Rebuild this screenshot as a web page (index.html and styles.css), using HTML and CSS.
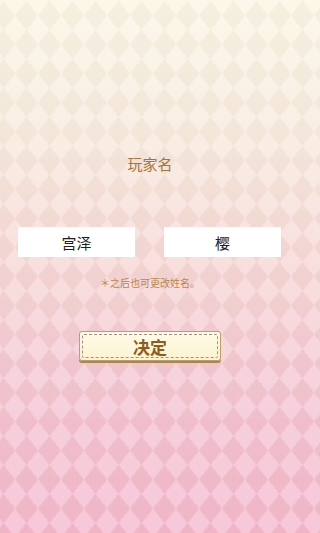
FILE: index.html
```html
<!DOCTYPE html>
<html lang="zh-CN">
<head>
<meta charset="utf-8">
<title>玩家名</title>
<link rel="stylesheet" href="styles.css">
</head>
<body>
<main class="screen">
  <h1 class="title">玩家名</h1>
  <div class="names">
    <div class="name-box">宫泽</div>
    <div class="name-box">樱</div>
  </div>
  <p class="note">＊之后也可更改姓名。</p>
  <button class="confirm" type="button"><span class="confirm-inner">决定</span></button>
</main>
</body>
</html>
```
FILE: styles.css
```css
html, body {
  margin: 0;
  padding: 0;
}

body {
  position: relative;
  min-width: 300px;
  height: 533px;
  overflow: hidden;
  font-family: "Noto Sans CJK SC", "Noto Sans", sans-serif;
  background-color: #f6e0dc;
  background-image:
    linear-gradient(to bottom right, rgba(150, 110, 40, 0.06) 25%, transparent 25%),
    linear-gradient(to bottom left, rgba(150, 110, 40, 0.06) 25%, transparent 25%),
    linear-gradient(to top right, rgba(150, 110, 40, 0.06) 25%, transparent 25%),
    linear-gradient(to top left, rgba(150, 110, 40, 0.06) 25%, transparent 25%),
    linear-gradient(to bottom, #fbf8ea 0%, #f9eee4 25%, #f8dede 52%, #f6cfdc 78%, #f6c8d9 100%);
  background-size: 23px 29px, 23px 29px, 23px 29px, 23px 29px, 100% 533px;
  background-position: 3.5px 15.5px, 3.5px 15.5px, 3.5px 15.5px, 3.5px 15.5px, 0 0;
  background-repeat: repeat, repeat, repeat, repeat, repeat-x;
}

/* pink tint of the dark diamonds, fading in toward the bottom */
body::before {
  content: "";
  position: absolute;
  inset: 0;
  z-index: 0;
  pointer-events: none;
  background-image:
    linear-gradient(to bottom right, rgba(230, 40, 120, 0.09) 25%, transparent 25%),
    linear-gradient(to bottom left, rgba(230, 40, 120, 0.09) 25%, transparent 25%),
    linear-gradient(to top right, rgba(230, 40, 120, 0.09) 25%, transparent 25%),
    linear-gradient(to top left, rgba(230, 40, 120, 0.09) 25%, transparent 25%);
  background-size: 23px 29px;
  background-position: 3.5px 15.5px;
  -webkit-mask-image: linear-gradient(to bottom, transparent 25%, #000 100%);
  mask-image: linear-gradient(to bottom, transparent 25%, #000 100%);
}

.screen {
  position: relative;
  z-index: 1;
  width: 300px;
  display: flex;
  flex-direction: column;
  align-items: center;
  height: 533px;
  box-sizing: border-box;
  padding-top: 154px;
}

.title {
  margin: 0;
  font-size: 15px;
  line-height: 20px;
  height: 20px;
  font-weight: normal;
  color: #a4763a;
}

.names {
  margin-top: 53px;
  display: flex;
  gap: 29px;
  width: 100%;
  box-sizing: border-box;
  padding-left: 18px;
}

.name-box {
  width: 117px;
  height: 30px;
  background: #ffffff;
  display: flex;
  align-items: center;
  justify-content: center;
  font-size: 15px;
  color: #1e1e1e;
}

.note {
  margin: 19px 0 0;
  font-size: 10px;
  line-height: 14px;
  height: 14px;
  color: #b8874a;
}

.confirm {
  margin-top: 41px;
  width: 142px;
  height: 30px;
  padding: 2px;
  box-sizing: border-box;
  border: 1px solid #bf9c6c;
  border-radius: 3px;
  background: linear-gradient(to bottom, #fffbe8, #fdf2d2);
  box-shadow: 0 2px 0 #a8865a;
  font-family: inherit;
  cursor: pointer;
}

.confirm-inner {
  display: flex;
  align-items: center;
  justify-content: center;
  height: 100%;
  box-sizing: border-box;
  border: 1px dashed #a69077;
  border-radius: 2px;
  font-size: 17px;
  font-weight: bold;
  color: #8e5c1e;
}
```
